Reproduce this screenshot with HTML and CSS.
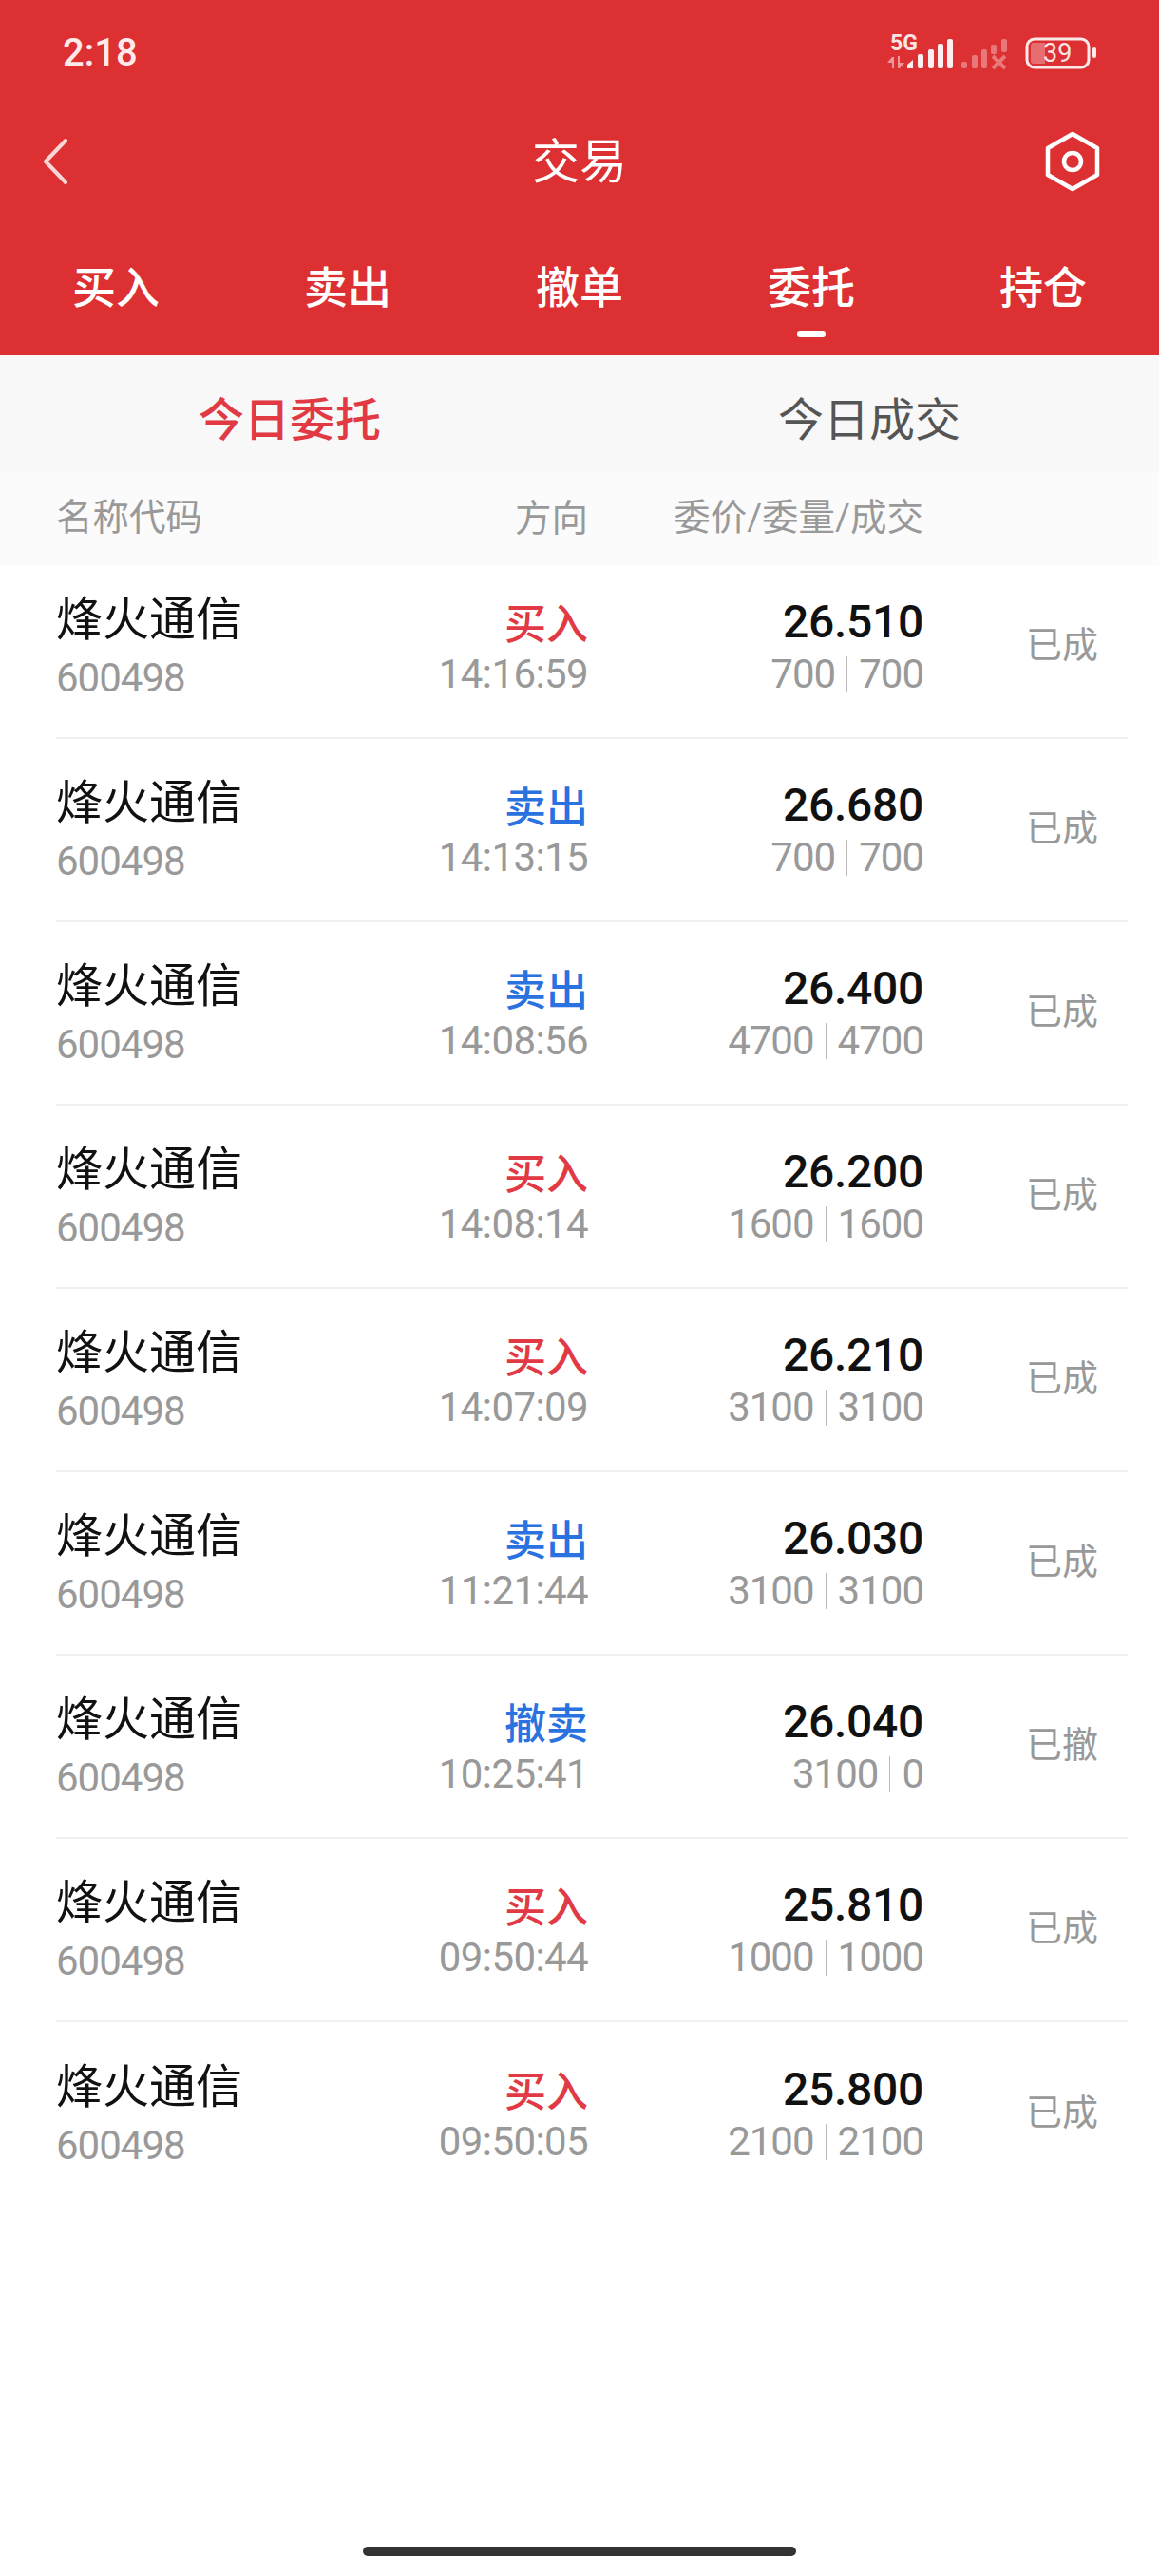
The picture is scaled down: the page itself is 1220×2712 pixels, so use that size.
FILE: index.html
```html
<!DOCTYPE html>
<html lang="zh-CN">
<head>
    <meta charset="UTF-8">
    <title>交易</title>
    <link rel="stylesheet" href="styles.css">
</head>
<body>
    <div class="page">
        <div class="header">
            <div class="status-bar">
                <span class="clock">2:18</span>
                <svg class="status-icons" width="230" height="46" viewBox="930 30 230 46">
                    <text x="937" y="53" class="net-label">5G</text>
                    <path d="M934 66l5-6h2v12h-2v-6zM952 66l-5 6h-2V59h2v7z" fill="#fff" fill-opacity=".5"/>
                    <g fill="#fff" fill-opacity=".92">
                        <path d="M955 72v-4l6-5v9z"/>
                        <rect x="966" y="57" width="6" height="15" rx="2"/>
                        <rect x="977" y="52" width="6" height="20" rx="2"/>
                        <rect x="987" y="46" width="6" height="26" rx="2"/>
                        <rect x="997" y="41" width="6" height="31" rx="2"/>
                    </g>
                    <g fill="#fff" fill-opacity=".35">
                        <rect x="1012" y="65" width="6" height="7" rx="2"/>
                        <rect x="1023" y="58" width="6" height="14" rx="2"/>
                        <rect x="1033" y="52" width="6" height="20" rx="2"/>
                        <rect x="1043" y="47" width="6" height="10" rx="2"/>
                        <rect x="1054" y="41" width="6" height="14" rx="2"/>
                    </g>
                    <path d="M1045 59l13 13M1058 59l-13 13" stroke="#fff" stroke-opacity=".35" stroke-width="4"/>
                    <rect x="1081" y="41" width="65" height="30" rx="8" fill="none" stroke="#fff" stroke-opacity=".9" stroke-width="3"/>
                    <path d="M1085 48a3 3 0 0 1 3-3h12v22h-12a3 3 0 0 1-3-3z" fill="#fff" fill-opacity=".3"/>
                    <text x="1098" y="65" class="battery-label">39</text>
                    <rect x="1150" y="50" width="4" height="11" rx="2" fill="#fff" fill-opacity=".9"/>
                </svg>
            </div>
            <div class="title-bar">
                <svg class="back-icon" width="27" height="48" viewBox="0 0 27 48">
                    <path d="M24 2L3 24l21 22" fill="none" stroke="#fff" stroke-opacity=".8" stroke-width="4" stroke-linecap="round" stroke-linejoin="round"/>
                </svg>
                <span class="title">交易</span>
                <svg class="setting-icon" width="60" height="64" viewBox="0 0 60 64">
                    <path d="M30 3l26 15v28L30 61 4 46V18z" fill="none" stroke="#fff" stroke-width="4.500" stroke-linejoin="round"/>
                    <circle cx="30" cy="32" r="9" fill="none" stroke="#fff" stroke-width="4.500"/>
                </svg>
            </div>
            <div class="main-tabs">
                <div class="main-tab">买入</div>
                <div class="main-tab">卖出</div>
                <div class="main-tab">撤单</div>
                <div class="main-tab active">委托</div>
                <div class="main-tab">持仓</div>
            </div>
        </div>

        <div class="sub-tabs">
            <div class="sub-tab active">今日委托</div>
            <div class="sub-tab">今日成交</div>
        </div>

        <div class="table-head">
            <span class="col-name">名称代码</span>
            <span class="col-dir">方向</span>
            <span class="col-price">委价/委量/成交</span>
        </div>

        <div class="list">
            <div class="row">
                <div class="col-name"><div class="name">烽火通信</div><div class="code">600498</div></div>
                <div class="col-dir"><div class="dir buy">买入</div><div class="time">14:16:59</div></div>
                <div class="col-price"><div class="price">26.510</div><div class="qty"><span>700</span><span class="filled">700</span></div></div>
                <div class="col-state">已成</div>
            </div>
            <div class="row">
                <div class="col-name"><div class="name">烽火通信</div><div class="code">600498</div></div>
                <div class="col-dir"><div class="dir sell">卖出</div><div class="time">14:13:15</div></div>
                <div class="col-price"><div class="price">26.680</div><div class="qty"><span>700</span><span class="filled">700</span></div></div>
                <div class="col-state">已成</div>
            </div>
            <div class="row">
                <div class="col-name"><div class="name">烽火通信</div><div class="code">600498</div></div>
                <div class="col-dir"><div class="dir sell">卖出</div><div class="time">14:08:56</div></div>
                <div class="col-price"><div class="price">26.400</div><div class="qty"><span>4700</span><span class="filled">4700</span></div></div>
                <div class="col-state">已成</div>
            </div>
            <div class="row">
                <div class="col-name"><div class="name">烽火通信</div><div class="code">600498</div></div>
                <div class="col-dir"><div class="dir buy">买入</div><div class="time">14:08:14</div></div>
                <div class="col-price"><div class="price">26.200</div><div class="qty"><span>1600</span><span class="filled">1600</span></div></div>
                <div class="col-state">已成</div>
            </div>
            <div class="row">
                <div class="col-name"><div class="name">烽火通信</div><div class="code">600498</div></div>
                <div class="col-dir"><div class="dir buy">买入</div><div class="time">14:07:09</div></div>
                <div class="col-price"><div class="price">26.210</div><div class="qty"><span>3100</span><span class="filled">3100</span></div></div>
                <div class="col-state">已成</div>
            </div>
            <div class="row">
                <div class="col-name"><div class="name">烽火通信</div><div class="code">600498</div></div>
                <div class="col-dir"><div class="dir sell">卖出</div><div class="time">11:21:44</div></div>
                <div class="col-price"><div class="price">26.030</div><div class="qty"><span>3100</span><span class="filled">3100</span></div></div>
                <div class="col-state">已成</div>
            </div>
            <div class="row">
                <div class="col-name"><div class="name">烽火通信</div><div class="code">600498</div></div>
                <div class="col-dir"><div class="dir sell">撤卖</div><div class="time">10:25:41</div></div>
                <div class="col-price"><div class="price">26.040</div><div class="qty"><span>3100</span><span class="filled">0</span></div></div>
                <div class="col-state">已撤</div>
            </div>
            <div class="row">
                <div class="col-name"><div class="name">烽火通信</div><div class="code">600498</div></div>
                <div class="col-dir"><div class="dir buy">买入</div><div class="time">09:50:44</div></div>
                <div class="col-price"><div class="price">25.810</div><div class="qty"><span>1000</span><span class="filled">1000</span></div></div>
                <div class="col-state">已成</div>
            </div>
            <div class="row last">
                <div class="col-name"><div class="name">烽火通信</div><div class="code">600498</div></div>
                <div class="col-dir"><div class="dir buy">买入</div><div class="time">09:50:05</div></div>
                <div class="col-price"><div class="price">25.800</div><div class="qty"><span>2100</span><span class="filled">2100</span></div></div>
                <div class="col-state">已成</div>
            </div>
        </div>

        <div class="home-bar"></div>
    </div>
</body>
</html>
```
FILE: styles.css
```css
body {
    margin: 0;
    background-color: #fff;
    font-family: Roboto, "Noto Sans CJK SC", sans-serif;
}

.page {
    width: 1220px;
    height: 2712px;
    display: flex;
    flex-direction: column;
    overflow: hidden;
}

.header {
    height: 374px;
    background-color: #dd3033;
    color: #fff;
    display: flex;
    flex-direction: column;
}

.status-bar {
    height: 112px;
    padding-left: 66px;
    padding-right: 60px;
    display: flex;
    justify-content: space-between;
    box-sizing: border-box;
}

.clock {
    font-size: 40px;
    font-weight: 500;
    line-height: 112px;
    color: #ffe9e9;
}

.status-icons {
    margin-top: 30px;
}

.net-label {
    font-size: 23px;
    font-weight: 700;
    fill: #fff;
    fill-opacity: .9;
}

.battery-label {
    font-size: 27px;
    fill: #fff;
    fill-opacity: .9;
}

.title-bar {
    height: 116px;
    padding: 0 53px;
    display: grid;
    grid-template-columns: 1fr auto 1fr;
    align-items: center;
}

.title {
    font-size: 50px;
    line-height: 60px;
    padding-top: 2px;
}

.back-icon {
    margin-left: -8px;
}

.setting-icon {
    justify-self: end;
    margin-right: 8px;
}

.main-tabs {
    margin-top: 41px;
    display: grid;
    grid-template-columns: repeat(5, 1fr);
}

.main-tab {
    font-size: 46px;
    font-weight: 500;
    line-height: 68px;
    text-align: center;
    position: relative;
}

.main-tab.active::after {
    content: "";
    position: absolute;
    left: 50%;
    top: 80px;
    width: 30px;
    height: 6px;
    margin-left: -15px;
    border-radius: 3px;
    background-color: #fff;
}

.sub-tabs {
    height: 109px;
    padding-top: 14px;
    background-color: #f8f8f9;
    display: grid;
    grid-template-columns: 1fr 1fr;
}

.sub-tab {
    font-size: 48px;
    line-height: 109px;
    text-align: center;
    color: #555;
}

.sub-tab.active {
    font-weight: 500;
    color: #e13a44;
}

.table-head {
    height: 88px;
    padding: 0 33px 10px 59px;
    background-color: #fbfbfc;
    display: flex;
    align-items: center;
    font-size: 38.500px;
    color: #999;
}

.list {
    flex: 1;
}

.row {
    height: 193px;
    margin: 0 33px 0 59px;
    border-bottom: 2px solid #f0f0f0;
    box-sizing: border-box;
    display: flex;
    align-items: center;
}

.row:first-child {
    margin-top: -10px;
}

.row.last {
    border-bottom: none;
}

.col-name {
    width: 300px;
    flex: none;
    padding-top: 0;
}

.col-dir {
    width: 260px;
    flex: none;
    padding-top: 2px;
    text-align: right;
}

.col-price {
    width: 353px;
    flex: none;
    text-align: right;
}

.col-state {
    width: 184px;
    flex: none;
    padding-bottom: 10px;
    text-align: right;
    font-size: 38px;
    color: #999;
}

.name {
    font-size: 49px;
    line-height: 64px;
    color: #111;
}

.code {
    margin-top: 3px;
    font-size: 42px;
    letter-spacing: -1px;
    line-height: 52px;
    color: #999;
}

.dir {
    font-size: 44px;
    font-weight: 500;
    line-height: 56px;
}

.buy {
    color: #e13a44;
}

.sell {
    color: #2a72e0;
}

.time {
    font-size: 42px;
    letter-spacing: -.6px;
    line-height: 48px;
    color: #999;
}

.price {
    font-size: 48px;
    font-weight: 500;
    letter-spacing: -.3px;
    line-height: 56px;
    color: #111;
}

.qty {
    margin-top: 3px;
    font-size: 42px;
    letter-spacing: -1px;
    line-height: 48px;
    color: #999;
}

.filled {
    display: inline-block;
    margin-left: 12px;
    padding-left: 12px;
    line-height: 38px;
    border-left: 1px solid #bbb;
}

.home-bar {
    width: 456px;
    height: 10px;
    margin: 0 auto 21px;
    border-radius: 5px;
    background-color: #333;
}
```
